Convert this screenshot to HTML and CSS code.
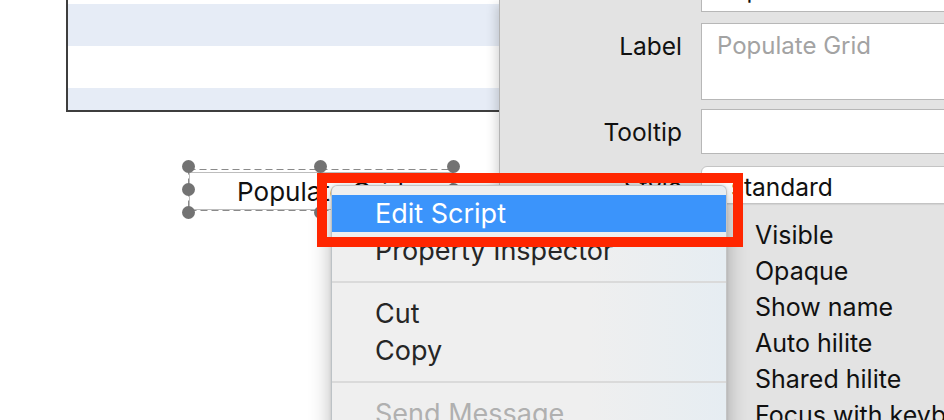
FILE: index.html
```html
<!DOCTYPE html>
<html lang="en">
<head>
<meta charset="utf-8">
<title>Card editor</title>
<link rel="stylesheet" href="styles.css">
</head>
<body>
<div class="window">
  <main class="canvas">
    <div class="grid">
      <div class="row row-white row-top"></div>
      <div class="row row-blue"></div>
      <div class="row row-white"></div>
      <div class="row row-blue row-last"></div>
    </div>

    <div class="sel">
      <svg class="sel-frame" width="265" height="46" viewBox="0 0 265 46">
        <rect x="0.5" y="3.5" width="264" height="41" fill="none" stroke="#8a8a8a" stroke-width="1" stroke-dasharray="7 4"/>
      </svg>
      <button class="card-btn">Populate Grid</button>
      <span class="h h-tl"></span>
      <span class="h h-tm"></span>
      <span class="h h-tr"></span>
      <span class="h h-ml"></span>
      <span class="h h-mr"></span>
      <span class="h h-bl"></span>
      <span class="h h-bm"></span>
      <span class="h h-br"></span>
    </div>
  </main>

  <aside class="inspector">
    <div class="form">
      <div class="lbl">Name</div>
      <div class="field field-name">Populate Grid</div>

      <div class="lbl lbl-label">Label</div>
      <div class="field field-label"><span class="placeholder">Populate Grid</span></div>

      <div class="lbl lbl-tip">Tooltip</div>
      <div class="field field-tip"></div>

      <div class="lbl lbl-style">Style</div>
      <div class="popup">standard</div>

      <div class="lbl"></div>
      <ul class="checks">
        <li><span class="cb"></span>Visible</li>
        <li><span class="cb"></span>Opaque</li>
        <li><span class="cb"></span>Show name</li>
        <li><span class="cb"></span>Auto hilite</li>
        <li><span class="cb"></span>Shared hilite</li>
        <li><span class="cb"></span>Focus with keyboard</li>
      </ul>
    </div>
  </aside>

  <div class="menu">
    <div class="mi mi-active">Edit Script</div>
    <div class="mi">Property Inspector</div>
    <div class="sep"></div>
    <div class="mi">Cut</div>
    <div class="mi">Copy</div>
    <div class="sep"></div>
    <div class="mi mi-disabled">Send Message</div>
  </div>

  <div class="callout"></div>
</div>
</body>
</html>
```

FILE: styles.css
```css
* { box-sizing: border-box; }

html, body {
  margin: 0;
  padding: 0;
  background: #ffffff;
}

body {
  width: 944px;
  height: 420px;
  overflow: hidden;
  font-family: "Inter", "Noto Sans", "Liberation Sans", sans-serif;
  color: #111;
}

.window {
  position: relative;
  display: flex;
  width: 944px;
  height: 420px;
  overflow: hidden;
}

/* ---------- canvas ---------- */
.canvas {
  position: relative;
  flex: none;
  width: 499px;
  height: 420px;
  background: #fff;
}

.grid {
  margin-left: 66px;
  width: 470px;
  border-left: 2px solid #3e3e3e;
  border-bottom: 2px solid #3e3e3e;
}

.row { height: 42px; }
.row-white { background: #ffffff; }
.row-blue { background: #e6ecf6; }
.row-top { height: 4px; }
.row-last { height: 22px; }

/* selected button on the card */
.sel {
  position: absolute;
  left: 188px;
  top: 166px;
  width: 265px;
  height: 46px;
}

.sel-frame {
  position: absolute;
  left: 0;
  top: 0;
}

.card-btn {
  position: absolute;
  left: 1px;
  top: 6px;
  width: 263px;
  height: 38px;
  margin: 0;
  padding: 1px 0 0;
  border: 1px solid #bdbdbd;
  background: #fff;
  font-family: "Inter", "Noto Sans", sans-serif;
  font-size: 26px;
  color: #111;
  text-align: center;
  line-height: 35px;
}

.h {
  position: absolute;
  width: 13px;
  height: 13px;
  margin: -6.5px 0 0 -6.5px;
  border-radius: 50%;
  background: #737373;
}
.h-tl { left: 0; top: 0; }
.h-tm { left: 132.5px; top: 0; }
.h-tr { left: 265px; top: 0; }
.h-ml { left: 0; top: 23px; }
.h-mr { left: 265px; top: 23px; }
.h-bl { left: 0; top: 46px; }
.h-bm { left: 132.5px; top: 46px; }
.h-br { left: 265px; top: 46px; }

/* ---------- inspector ---------- */
.inspector {
  position: relative;
  z-index: 1;
  flex: 1;
  min-width: 0;
  background: #e3e3e3;
  border-left: 1px solid #b3b3b3;
  box-shadow: -7px 0 10px -4px rgba(0, 0, 0, 0.16);
}

.form {
  display: grid;
  grid-template-columns: 182px 270px;
  column-gap: 19px;
  margin-top: -33px;
}

.lbl {
  text-align: right;
  font-size: 24.5px;
  line-height: 45px;
  color: #111;
  white-space: nowrap;
}

.field {
  height: 45px;
  background: #fff;
  border: 1px solid #b7b7b7;
  padding: 7px 0 0 15px;
  font-size: 24px;
  line-height: 29px;
  color: #111;
  white-space: nowrap;
}

.lbl-label { margin-top: 11px; padding-top: 1px; }
.field-label { margin-top: 11px; height: 77px; }
.placeholder { color: #a3a3a3; }

.lbl-tip { margin-top: 9px; padding-top: 1px; }
.field-tip { margin-top: 9px; }

.lbl-style { margin-top: 11px; line-height: 38px; padding-top: 2px; }
.popup {
  margin-top: 11px;
  height: 38px;
  background: #fff;
  border: 1px solid #c4c4c4;
  border-radius: 6px;
  box-shadow: 0 1px 1px rgba(0, 0, 0, 0.08);
  padding: 2px 0 0 29px;
  font-size: 24.5px;
  line-height: 36px;
  color: #111;
}

.checks {
  list-style: none;
  margin: 11px 0 0;
  padding: 0;
}
.checks li {
  display: flex;
  align-items: center;
  height: 36px;
  font-size: 25px;
  line-height: 36px;
  color: #111;
  white-space: nowrap;
}
.cb {
  flex: none;
  width: 20px;
  height: 20px;
  margin: 0 32px 0 2px;
  border: 1px solid #9a9a9a;
  border-radius: 4px;
  background: #fff;
}

/* ---------- context menu ---------- */
.menu {
  position: absolute;
  z-index: 5;
  left: 331px;
  top: 185px;
  width: 396px;
  height: 260px;
  padding-top: 9px;
  background: linear-gradient(90deg, #efefef 0%, #efefef 65%, #e6edf2 100%);
  border: 1px solid rgba(0, 0, 0, 0.18);
  border-radius: 6px;
  box-shadow: 0 8px 22px rgba(0, 0, 0, 0.28), 0 0 3px rgba(0, 0, 0, 0.12);
}

.mi {
  height: 37px;
  padding-left: 43px;
  font-size: 27px;
  line-height: 37px;
  color: #262626;
  white-space: nowrap;
}
.mi-active {
  background: #3b94fb;
  color: #fff;
}
.mi-disabled { color: #b0b0b0; }

.sep {
  height: 26px;
  padding: 12px 0;
}
.sep::before {
  content: "";
  display: block;
  height: 2px;
  background: #dadada;
}

/* ---------- red annotation ---------- */
.callout {
  position: absolute;
  z-index: 6;
  left: 317px;
  top: 173px;
  width: 426px;
  height: 74px;
  border: 10px solid #ff2600;
}
```
